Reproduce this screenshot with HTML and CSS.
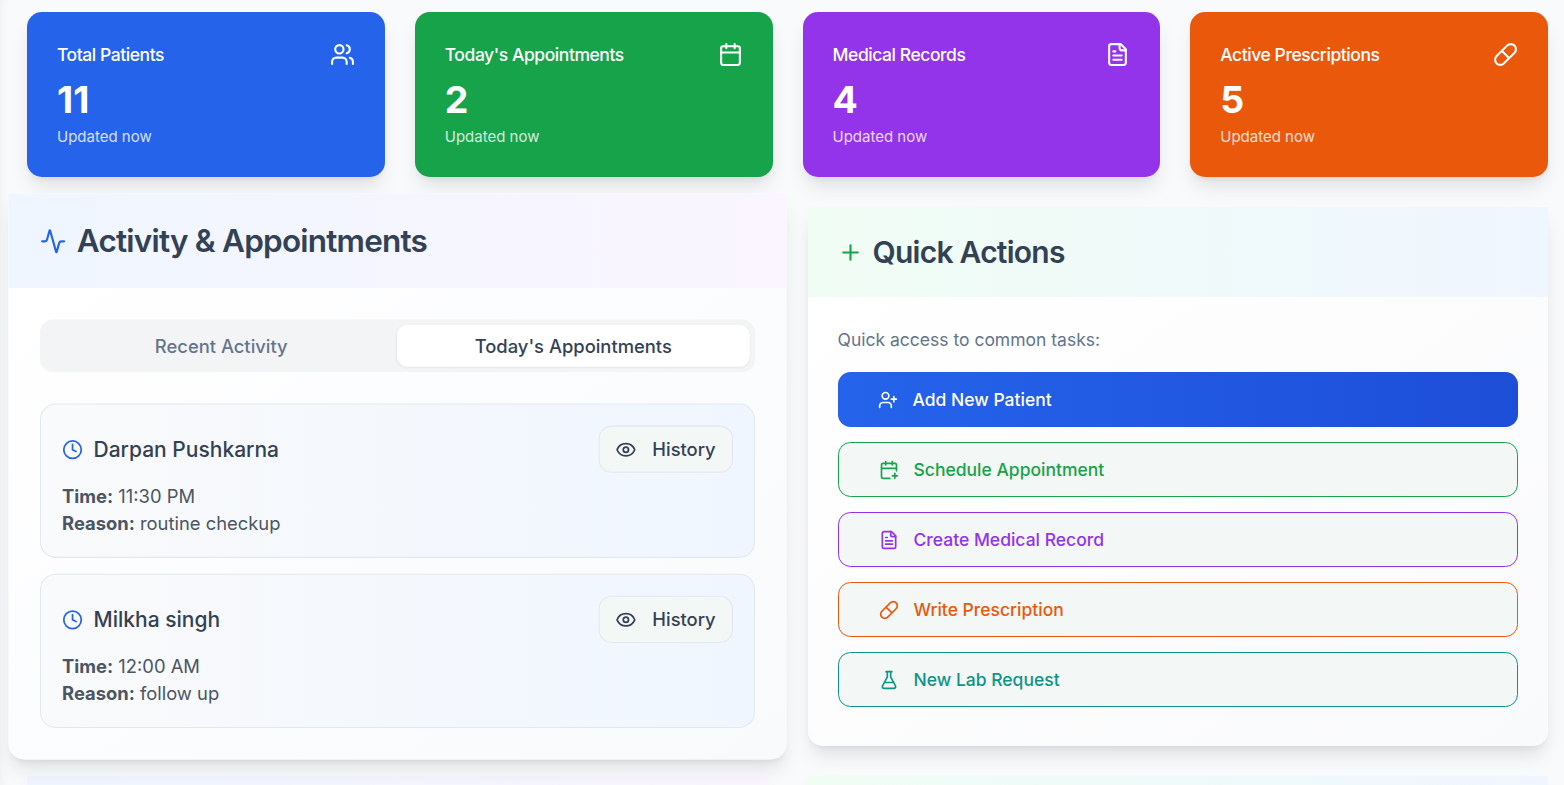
FILE: index.html
```html
<!DOCTYPE html>
<html lang="en">
<head>
<meta charset="utf-8">
<title>Clinic dashboard</title>
<link rel="stylesheet" href="styles.css">
</head>
<body>
<svg width="0" height="0" class="sprite">
  <symbol id="users" viewBox="0 0 24 24"><path d="M16 21v-2a4 4 0 0 0-4-4H6a4 4 0 0 0-4 4v2"/><circle cx="9" cy="7" r="4"/><path d="M22 21v-2a4 4 0 0 0-3-3.87M16 3.13a4 4 0 0 1 0 7.75"/></symbol>
  <symbol id="calendar" viewBox="0 0 24 24"><path d="M8 2v4M16 2v4"/><rect width="18" height="18" x="3" y="4" rx="2"/><path d="M3 10h18"/></symbol>
  <symbol id="file" viewBox="0 0 24 24"><path d="M15 2H6a2 2 0 0 0-2 2v16a2 2 0 0 0 2 2h12a2 2 0 0 0 2-2V7Z"/><path d="M14 2v4a2 2 0 0 0 2 2h4M10 9H8M16 13H8M16 17H8"/></symbol>
  <symbol id="pill" viewBox="0 0 24 24"><path d="m10.5 20.5 10-10a4.95 4.95 0 1 0-7-7l-10 10a4.95 4.95 0 1 0 7 7ZM8.5 8.5l7 7"/></symbol>
  <symbol id="activity" viewBox="0 0 24 24"><path d="M22 12h-2.48a2 2 0 0 0-1.93 1.46l-2.35 8.36a.25.25 0 0 1-.48 0L9.24 2.18a.25.25 0 0 0-.48 0l-2.35 8.36A2 2 0 0 1 4.49 12H2"/></symbol>
  <symbol id="plus" viewBox="0 0 24 24"><path d="M5 12h14M12 5v14"/></symbol>
  <symbol id="clock" viewBox="0 0 24 24"><circle cx="12" cy="12" r="10"/><path d="M12 6v6l4 2"/></symbol>
  <symbol id="eye" viewBox="0 0 24 24"><path d="M2.062 12.348a1 1 0 0 1 0-.696 10.75 10.75 0 0 1 19.876 0 1 1 0 0 1 0 .696 10.75 10.75 0 0 1-19.876 0"/><circle cx="12" cy="12" r="3"/></symbol>
  <symbol id="user-plus" viewBox="0 0 24 24"><path d="M16 21v-2a4 4 0 0 0-4-4H6a4 4 0 0 0-4 4v2"/><circle cx="9" cy="7" r="4"/><path d="M19 8v6M22 11h-6"/></symbol>
  <symbol id="calendar-plus" viewBox="0 0 24 24"><path d="M8 2v4M16 2v4M21 13V6a2 2 0 0 0-2-2H5a2 2 0 0 0-2 2v14a2 2 0 0 0 2 2h8M3 10h18M16 19h6M19 16v6"/></symbol>
  <symbol id="flask" viewBox="0 0 24 24"><path d="M14 2v6a2 2 0 0 0 .245.96l5.51 10.08A2 2 0 0 1 18 22H6a2 2 0 0 1-1.755-2.96l5.51-10.08A2 2 0 0 0 10 8V2M6.453 15h11.094M8.5 2h7"/></symbol>
</svg>
<main class="page">
  <section class="stats">
    <article class="stat blue"><div class="stat-head"><h3>Total Patients</h3><svg class="icon lg"><use href="#users"/></svg></div><div class="value">11</div><p>Updated now</p></article>
    <article class="stat green"><div class="stat-head"><h3>Today's Appointments</h3><svg class="icon lg"><use href="#calendar"/></svg></div><div class="value">2</div><p>Updated now</p></article>
    <article class="stat purple"><div class="stat-head"><h3>Medical Records</h3><svg class="icon lg"><use href="#file"/></svg></div><div class="value">4</div><p>Updated now</p></article>
    <article class="stat orange"><div class="stat-head"><h3>Active Prescriptions</h3><svg class="icon lg"><use href="#pill"/></svg></div><div class="value">5</div><p>Updated now</p></article>
  </section>
  <section class="panels">
    <article class="panel raised">
      <header class="panel-head violet"><svg class="icon lg ink-blue"><use href="#activity"/></svg><h2>Activity &amp; Appointments</h2></header>
      <div class="panel-body">
        <div class="tabs"><button class="tab">Recent Activity</button><button class="tab active">Today's Appointments</button></div>
        <div class="visits">
          <div class="visit">
            <div class="visit-head"><svg class="icon ink-blue"><use href="#clock"/></svg><h4>Darpan Pushkarna</h4><button class="history"><svg class="icon"><use href="#eye"/></svg>History</button></div>
            <p><b>Time:</b> 11:30 PM</p><p><b>Reason:</b> routine checkup</p>
          </div>
          <div class="visit">
            <div class="visit-head"><svg class="icon ink-blue"><use href="#clock"/></svg><h4>Milkha singh</h4><button class="history"><svg class="icon"><use href="#eye"/></svg>History</button></div>
            <p><b>Time:</b> 12:00 AM</p><p><b>Reason:</b> follow up</p>
          </div>
        </div>
      </div>
    </article>
    <article class="panel">
      <header class="panel-head mint"><svg class="icon lg ink-green"><use href="#plus"/></svg><h2>Quick Actions</h2></header>
      <div class="panel-body">
        <p class="hint">Quick access to common tasks:</p>
        <div class="actions">
          <button class="action primary"><svg class="icon"><use href="#user-plus"/></svg>Add New Patient</button>
          <button class="action ink-green"><svg class="icon"><use href="#calendar-plus"/></svg>Schedule Appointment</button>
          <button class="action ink-purple"><svg class="icon"><use href="#file"/></svg>Create Medical Record</button>
          <button class="action ink-orange"><svg class="icon"><use href="#pill"/></svg>Write Prescription</button>
          <button class="action ink-teal"><svg class="icon"><use href="#flask"/></svg>New Lab Request</button>
        </div>
      </div>
    </article>
    <article class="panel"><header class="panel-head violet"></header></article>
    <article class="panel"><header class="panel-head mint"></header></article>
  </section>
</main>
</body>
</html>
```
FILE: styles.css
```css
* { box-sizing: border-box; margin: 0; padding: 0; }
body {
  height: 785px;
  overflow: hidden;
  background: #f9fafc;
  font-family: Inter, "Liberation Sans", sans-serif;
  font-size: 17.5px;
  color: #334155;
}
button { font: inherit; font-weight: 500; color: inherit; border: 0; background: none; }
.sprite { position: absolute; }
.page {
  height: 785px;
  overflow: hidden;
  padding: 12px 16px 0 27px;
  box-shadow: inset 8px 0 10px -7px rgba(0, 0, 0, .05);
}
.icon { width: 20px; height: 20px; flex: none; fill: none; stroke: currentColor; stroke-width: 2; stroke-linecap: round; stroke-linejoin: round; }
.icon.lg { width: 25px; height: 25px; }
.ink-blue { color: #2563eb; }
.ink-green { color: #16a34a; }
.ink-purple { color: #9333ea; }
.ink-orange { color: #ea580c; }
.ink-teal { color: #0d9488; }

.stats { display: grid; grid-template-columns: repeat(4, 1fr); gap: 30px; }
.stat {
  height: 165px;
  padding: 30px;
  border-radius: 15px;
  color: #fff;
  box-shadow: 0 12.5px 18.75px -3.75px rgba(0, 0, 0, .1), 0 5px 7.5px -5px rgba(0, 0, 0, .1);
}
.stat.blue { background: #2563eb; }
.stat.green { background: #16a34a; }
.stat.purple { background: #9333ea; }
.stat.orange { background: #ea580c; }
.stat-head { display: flex; align-items: center; justify-content: space-between; height: 25px; }
.stat h3 { font-size: 17.5px; font-weight: 500; letter-spacing: -.025em; }
.value { margin-top: 10px; font-size: 37.5px; line-height: 45px; font-weight: 700; }
.stat p { margin-top: 5px; font-size: 15px; line-height: 20px; opacity: .8; }

.panels { display: grid; grid-template-columns: 1fr 1fr; gap: 30px 40px; margin-top: 30px; }
.panel {
  background: linear-gradient(to bottom right, #fff, #f9fafb);
  border-radius: 0 0 15px 15px;
  box-shadow: 0 12.5px 18.75px -3.75px rgba(0, 0, 0, .1), 0 5px 7.5px -5px rgba(0, 0, 0, .1);
}
.panel.raised {
  transform: scale(1.05);
  background: linear-gradient(to bottom right, #fff, #f8fafc);
}
.panel-head { display: flex; align-items: center; gap: 10px; height: 90px; padding: 30px; }
.violet { background: linear-gradient(to right, #eff6ff, #faf5ff); }
.mint { background: linear-gradient(to right, #f0fdf4, #eff6ff); }
.panel-head h2 { font-size: 30px; line-height: 30px; font-weight: 600; letter-spacing: -.025em; }
.panel-body { padding: 30px; }

.tabs { display: grid; grid-template-columns: 1fr 1fr; height: 50px; padding: 5px; border-radius: 12.5px; background: #f3f4f6; color: #64748b; }
.tab { border-radius: 10px; }
.tab.active { background: #fff; color: #334155; box-shadow: 0 1px 2px rgba(0, 0, 0, .05); }
.visits { display: grid; gap: 15px; margin-top: 30px; }
.visit { height: 147px; padding: 20px; border: 1px solid #e2e8f0; border-radius: 15px; background: linear-gradient(to right, #f9fafb, #eff6ff); }
.visit-head { display: flex; align-items: center; gap: 10px; height: 45px; margin-bottom: 10px; }
.visit h4 { flex: 1; font-size: 20px; font-weight: 500; }
.visit p { line-height: 25.4px; color: #4b5563; }
.visit b { font-weight: 700; }
.history { display: flex; align-items: center; gap: 15px; height: 45px; padding: 0 15px; border: 1px solid #e2e8f0; border-radius: 12.5px; background: #f3f7f6; }

.hint { line-height: 25px; color: #64748b; }
.actions { display: grid; gap: 15px; margin-top: 20px; }
.action { display: flex; align-items: center; gap: 15px; height: 55px; padding: 0 40px; border: 1px solid currentColor; border-radius: 12.5px; background: #f3f7f6; }
.action.primary { border: 0; color: #fff; background: linear-gradient(to right, #2563eb, #1d4ed8); }
```
